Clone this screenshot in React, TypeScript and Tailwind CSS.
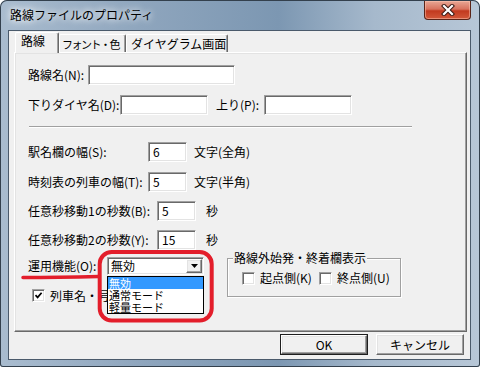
import React from "react";

const sunken =
  "bg-white border border-t-[#a0a0a0] border-l-[#a0a0a0] border-b-white border-r-white shadow-[inset_1px_1px_0_#696969,inset_-1px_-1px_0_#e3e3e3]";
const raised =
  "border border-t-white border-l-white border-b-[#696969] border-r-[#696969] shadow-[inset_-1px_-1px_0_#a0a0a0,inset_1px_1px_0_#e3e3e3]";

const Input = ({ className, value }: { className: string; value?: string }) => (
  <div className={`h-[20px] ${sunken} pl-[4px] text-[12px] leading-[18px] ${className}`}>{value}</div>
);

const Check = ({ checked }: { checked?: boolean }) => (
  <div className={`w-[13px] h-[13px] shrink-0 ${sunken} flex items-center justify-center`}>
    {checked && (
      <svg width="9" height="9" viewBox="0 0 9 9">
        <path d="M1.5 4.2 L3.6 6.4 L7.6 1.8" stroke="#000" strokeWidth="1.7" fill="none" />
      </svg>
    )}
  </div>
);

const App = () => {
  return (
    <div className="relative w-[480px] h-[367px] overflow-hidden rounded-t-[7px] rounded-b-[3px] bg-[linear-gradient(90deg,#a9bccf_0%,#8ea5bd_30%,#7c97b2_58%,#a6b9cc_78%,#b7c7d7_100%)] shadow-[inset_0_0_0_1px_#33404d] font-['Noto_Sans_CJK_JP',sans-serif] text-black">
      {/* Title bar */}
      <div className="flex justify-between h-[30px]">
        <div className="pl-[10px] self-center text-[12px] leading-[14px] [text-shadow:0_0_6px_#fff,0_0_10px_#fff]">
          路線ファイルのプロパティ
        </div>
        <div className="mt-[1px] mr-[9px] w-[47px] h-[19px] rounded-b-[4px] border border-[#5a2418] border-t-0 bg-[linear-gradient(180deg,#e8a795_0%,#d8735e_45%,#c23a1f_55%,#d2583a_100%)] shadow-[inset_0_0_0_1px_rgba(255,200,180,0.5)] flex items-center justify-center">
          <svg width="14" height="12" viewBox="0 0 14 12">
            <path d="M3 2 L11 10 M11 2 L3 10" stroke="#3a1a14" strokeWidth="4.2" strokeLinecap="square" />
            <path d="M3 2 L11 10 M11 2 L3 10" stroke="#fff" strokeWidth="2.2" strokeLinecap="square" />
          </svg>
        </div>
      </div>

      {/* Client area */}
      <div className="ml-[8px] w-[463px] h-[330px] border border-[#4a5a6b] bg-[#f0f0f0] text-[12px]">
        {/* Tabs */}
        <div className="flex items-end h-[21px] pl-[6px]">
          <div className="relative z-10 w-[44px] h-[21px] mb-[-1px] bg-[#f0f0f0] rounded-t-[2px] border border-b-0 border-t-white border-l-white border-r-[#696969] shadow-[inset_-1px_0_0_#a0a0a0] pl-[5px] pt-[1px] leading-[14px] whitespace-nowrap">
            路線
          </div>
          <div className="w-[67px] h-[18px] overflow-hidden rounded-t-[2px] border border-b-0 border-t-white border-l-white border-r-[#696969] shadow-[inset_-1px_0_0_#a0a0a0] pl-[2px] pt-[2px] text-[11px] leading-[14px] whitespace-nowrap tracking-[-1.5px]">
            フォント・色
          </div>
          <div className="w-[102px] h-[18px] rounded-t-[2px] border border-b-0 border-t-white border-l-white border-r-[#696969] shadow-[inset_-1px_0_0_#a0a0a0] pl-[4px] pt-[2px] leading-[14px] whitespace-nowrap">
            ダイヤグラム画面
          </div>
        </div>

        {/* Tab panel */}
        <div className="ml-[5px] w-[453px] h-[280px] border border-t-white border-l-white border-b-[#696969] border-r-[#696969] shadow-[inset_-1px_-1px_0_#a0a0a0,inset_1px_1px_0_#e3e3e3] pl-[13px] flex flex-col">
          <div className="mt-[12px] flex items-center h-[20px]">
            <span className="w-[60px]">路線名(N):</span>
            <Input className="w-[147px]" />
          </div>
          <div className="mt-[10px] flex items-center h-[20px]">
            <span className="w-[92px] whitespace-nowrap">下りダイヤ名(D):</span>
            <Input className="w-[88px]" />
            <span className="ml-[8px] w-[48px]">上り(P):</span>
            <Input className="w-[88px]" />
          </div>
          <div className="mt-[11px] ml-[1px] w-[383px] h-[2px] border-t border-t-[#a0a0a0] border-b border-b-white" />
          <div className="mt-[14px] flex items-center h-[20px]">
            <span className="w-[120px]">駅名欄の幅(S):</span>
            <Input className="w-[39px]" value="6" />
            <span className="ml-[7px]">文字(全角)</span>
          </div>
          <div className="mt-[10px] flex items-center h-[20px]">
            <span className="w-[120px] whitespace-nowrap">時刻表の列車の幅(T):</span>
            <Input className="w-[39px]" value="5" />
            <span className="ml-[7px]">文字(半角)</span>
          </div>
          <div className="mt-[9px] flex items-center h-[20px]">
            <span className="w-[129px] whitespace-nowrap">任意秒移動1の秒数(B):</span>
            <Input className="w-[39px]" value="5" />
            <span className="ml-[10px]">秒</span>
          </div>
          <div className="mt-[9px] flex items-center h-[20px]">
            <span className="w-[129px] whitespace-nowrap">任意秒移動2の秒数(Y):</span>
            <Input className="w-[39px]" value="15" />
            <span className="ml-[10px]">秒</span>
          </div>

          <div className="mt-[7px] flex">
            <div className="w-[199px] flex flex-col">
              <div className="flex items-center h-[18px]">
                <span className="w-[79px]">運用機能(O):</span>
                <div className={`relative w-[97px] h-[18px] ${sunken} flex items-center`}>
                  <span className="pl-[3px] text-[12px] leading-[16px] flex-1">無効</span>
                  <div className={`w-[16px] h-[14px] mr-[1px] bg-[#f0f0f0] ${raised} flex items-center justify-center`}>
                    <svg width="7" height="4" viewBox="0 0 7 4">
                      <path d="M0 0 H7 L3.5 4 Z" fill="#000" />
                    </svg>
                  </div>
                  {/* Dropdown list */}
                  <div className="absolute z-20 top-[18px] left-[-1px] w-[97px] border border-black bg-white text-[11px] leading-[12px]">
                    <div className="h-[12px] bg-[#3399ff] text-white pl-[1px]">無効</div>
                    <div className="h-[12px] pl-[1px]">通常モード</div>
                    <div className="h-[12px] pl-[1px]">軽量モード</div>
                  </div>
                </div>
              </div>
              <div className="mt-[14px] ml-[4px] flex items-center h-[13px]">
                <Check checked />
                <span className="ml-[5px] whitespace-nowrap">列車名・号</span>
              </div>
            </div>

            <div className="relative mt-[1px] w-[174px] h-[39px] border border-[#a0a0a0] shadow-[inset_1px_1px_0_#fff,1px_1px_0_#fff] pl-[14px] pt-[13px]">
              <span className="absolute top-[-8px] left-[5px] bg-[#f0f0f0] px-[1px] leading-[14px] whitespace-nowrap">
                路線外始発・終着欄表示
              </span>
              <div className="flex items-center h-[12px]">
                <div className="w-[77px] flex items-center">
                  <Check />
                  <span className="ml-[5px]">起点側(K)</span>
                </div>
                <Check />
                <span className="ml-[5px]">終点側(U)</span>
              </div>
            </div>
          </div>
        </div>

        {/* Buttons */}
        <div className="mt-[2px] flex justify-end gap-[8px] pr-[6px]">
          <div className="w-[88px] h-[21px] border border-[#1e1e1e]">
            <div className={`w-full h-full ${raised} flex items-center justify-center`}>OK</div>
          </div>
          <div className={`w-[88px] h-[21px] ${raised} flex items-center justify-center`}>キャンセル</div>
        </div>
      </div>

      {/* Red annotation */}
      <svg className="pointer-events-none absolute left-0 top-0 z-30" width="480" height="367" viewBox="0 0 480 367">
        <rect x="99.7" y="252" width="112" height="68.5" rx="12" fill="none" stroke="#e31e2b" strokeWidth="4" />
        <path d="M23 277.5 C 50 277.5, 78 277, 99 276.5" fill="none" stroke="#e31e2b" strokeWidth="3.5" strokeLinecap="round" />
      </svg>
    </div>
  );
};

export default App;
